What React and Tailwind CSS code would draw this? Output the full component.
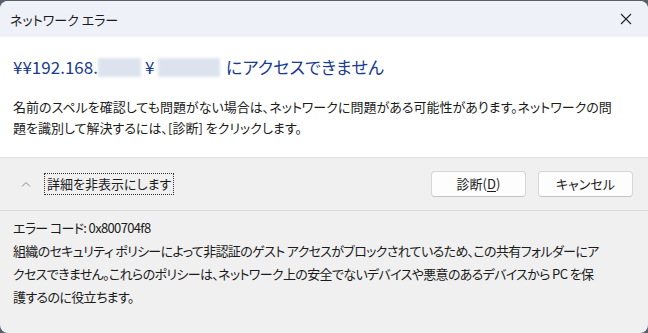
import React from 'react'

const jp = "[font-family:'Noto_Sans_CJK_JP',sans-serif] [font-feature-settings:'palt']"

const Blur = ({ w }) => (
  <span className={`inline-block h-[19px] bg-[#dde3ee] blur-[1.5px] ${w}`} />
)

const App = () => {
  return (
    <div className={`w-[648px] h-[333px] bg-[#59606b] overflow-hidden ${jp}`}>
      <div className="mt-px h-[332px] rounded-[8px] overflow-hidden bg-[#f0f0f0] flex flex-col text-[#1b1b1b]">
        {/* title bar */}
        <div className="h-[36px] shrink-0 bg-[#eef1f8] flex items-center justify-between pl-[10px] pr-[16px]">
          <span className="text-[13px] leading-none">ネットワーク エラー</span>
          <svg width="12" height="12" viewBox="0 0 12 12">
            <path d="M1 1 L11 11 M11 1 L1 11" stroke="#222" strokeWidth="1.1" />
          </svg>
        </div>

        {/* main */}
        <div className="h-[120px] shrink-0 bg-white px-[13px] pt-[18px]">
          <div className="text-[17px] leading-[24px] text-[#1a3b8e] whitespace-nowrap flex items-center">
            <span className="w-[85px]">¥¥192.168.</span>
            <Blur w="w-[43px]" />
            <span className="ml-[4px] w-[13px]">¥</span>
            <Blur w="w-[62px]" />
            <span className="ml-[6px] tracking-[0.2px]">にアクセスできません</span>
          </div>
          <div className="mt-[17px] text-[13px] leading-[21px] whitespace-nowrap">
            <div>名前のスペルを確認しても問題がない場合は、ネットワークに問題がある可能性があります。ネットワークの問</div>
            <div>題を識別して解決するには、[診断] をクリックします。</div>
          </div>
        </div>

        {/* footer */}
        <div className="h-[53px] shrink-0 border-t border-[#e0e0e0] flex items-center pl-[21px] pr-[15px]">
          <svg width="10" height="6" viewBox="0 0 10 6" className="mr-[13px]">
            <path d="M1 5.5 L5 1.5 L9 5.5" fill="none" stroke="#8a8a8a" strokeWidth="1" />
          </svg>
          <span className="text-[13px] leading-[20px] px-[2px] border border-dotted border-[#333]">
            詳細を非表示にします
          </span>
          <div className="ml-auto flex gap-[12px]">
            <button className="w-[95px] h-[26px] bg-[#fdfdfd] border border-[#d6d6d6] border-b-[#c4c4c4] rounded-[4px] text-[13px]">
              診断(<span className="underline underline-offset-2">D</span>)
            </button>
            <button className="w-[95px] h-[26px] bg-[#fdfdfd] border border-[#d6d6d6] border-b-[#c4c4c4] rounded-[4px] text-[13px]">
              キャンセル
            </button>
          </div>
        </div>

        {/* details */}
        <div className="flex-1 border-t border-[#dcdcdc] px-[13px] pt-[5px] text-[13px] leading-[23px] whitespace-nowrap tracking-[-0.65px]">
          <div>エラー コード: 0x800704f8</div>
          <div>組織のセキュリティ ポリシーによって非認証のゲスト アクセスがブロックされているため、この共有フォルダーにア</div>
          <div>クセスできません。これらのポリシーは、ネットワーク上の安全でないデバイスや悪意のあるデバイスから PC を保</div>
          <div>護するのに役立ちます。</div>
        </div>
      </div>
    </div>
  )
}

export default App
